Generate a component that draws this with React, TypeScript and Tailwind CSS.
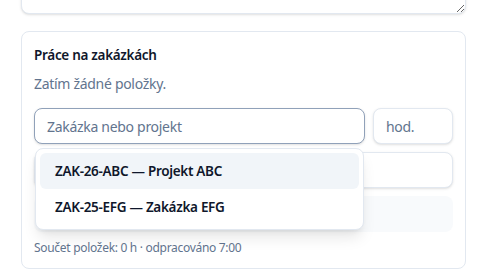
import React from "react";

const font = { fontFamily: "'Segoe UI', 'Noto Sans', sans-serif" } as const;

const OPTIONS = [
  { code: "ZAK-26-ABC", name: "Projekt ABC", active: true },
  { code: "ZAK-25-EFG", name: "Zakázka EFG", active: false },
];

export default function App() {
  return (
    <div className="min-h-screen bg-white pl-[21px] pr-[12px] overflow-hidden tracking-[-0.3px]" style={font}>
      {/* poznámka nahoře (odscrollovaná) */}
      <textarea
        className="block w-full h-[60px] mt-[-46px] rounded-lg border border-slate-200 bg-white shadow-sm outline-none resize-y"
        style={font}
      />

      <section className="mt-[17px] rounded-lg border border-slate-200 bg-white p-3">
        <h3 className="pt-px text-[13.5px] leading-5 font-semibold text-slate-900">Práce na zakázkách</h3>
        <p className="mt-[9px] text-sm leading-5 text-slate-500">Zatím žádné položky.</p>

        <div className="mt-[14px] grid grid-cols-[1fr_80px] gap-2">
          <div className="relative">
            <input
              placeholder="Zakázka nebo projekt"
              className="block w-full h-9 rounded-lg border border-slate-400 bg-white px-3 text-sm tracking-[-0.3px] text-slate-900 placeholder:text-slate-500 outline-none shadow-sm"
              style={font}
            />
            <div className="absolute left-px right-px top-[40px] z-10 rounded-lg border border-slate-200 bg-white p-1 shadow-lg">
              {OPTIONS.map((o) => (
                <div
                  key={o.code}
                  className={`h-9 flex items-center rounded-md pl-[15px] pr-4 text-[13.5px] font-semibold text-slate-900 ${
                    o.active ? "bg-slate-100" : ""
                  }`}
                >
                  {o.code} — {o.name}
                </div>
              ))}
            </div>
          </div>
          <input
            placeholder="hod."
            className="block w-full h-9 rounded-lg border border-slate-200 bg-white px-3 text-sm tracking-[-0.3px] text-slate-900 placeholder:text-slate-500 outline-none shadow-sm"
            style={font}
          />
          <input
            className="col-span-2 block w-full h-9 rounded-lg border border-slate-200 bg-white px-3 text-sm outline-none shadow-sm"
            style={font}
          />
          <div className="col-span-2 h-9 rounded-lg bg-slate-50" />
        </div>

        <p className="mt-2 text-xs leading-4 text-slate-500">Součet položek: 0 h · odpracováno 7:00</p>
      </section>
    </div>
  );
}
